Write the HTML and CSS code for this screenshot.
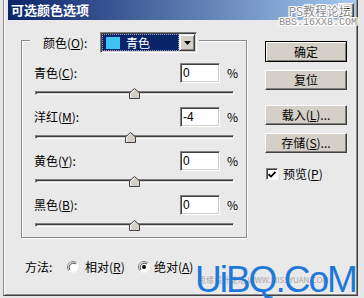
FILE: index.html
```html
<!DOCTYPE html>
<html lang="zh-CN">
<head>
<meta charset="utf-8">
<title>可选颜色选项</title>
<link rel="stylesheet" href="styles.css">
</head>
<body>
<div class="screen">
  <div class="window">
    <div class="titlebar">
      <span class="title">可选颜色选项</span>
      <span class="close-btn"><svg width="8" height="7" viewBox="0 0 8 7"><path d="M0 0h2l2 2 2-2h2v1l-2.5 2.5 2.5 2.5v1h-2l-2-2-2 2h-2v-1l2.5-2.5-2.5-2.5z" fill="#000"/></svg></span>
    </div>
    <div class="client">
      <div class="main">
        <div class="group">
          <div class="group-head">
            <span class="lbl head-lbl">颜色(<u>O</u>):</span>
            <div class="select">
              <div class="select-value"><span class="swatch"></span><span>青色</span></div>
              <div class="select-btn"><svg width="7" height="4" viewBox="0 0 7 4"><path d="M0 0h7L3.5 4z" fill="#000"/></svg></div>
            </div>
          </div>
          <div class="rows">
            <div class="row">
              <div class="line"><span class="lbl">青色(<u>C</u>):</span><div class="field">0</div><span class="pct">%</span></div>
              <div class="slider"><div class="track"></div><svg class="thumb" style="left:94px" width="11" height="11" viewBox="0 0 11 11"><path d="M0.5 10.5V5L5.5 0.5L10.5 5V10.5Z" fill="#d4d0c8" stroke="#404040"/><path d="M1.5 10V5.4L5.5 1.8" fill="none" stroke="#fff"/></svg></div>
            </div>
            <div class="row">
              <div class="line"><span class="lbl">洋红(<u>M</u>):</span><div class="field">-4</div><span class="pct">%</span></div>
              <div class="slider"><div class="track"></div><svg class="thumb" style="left:90px" width="11" height="11" viewBox="0 0 11 11"><path d="M0.5 10.5V5L5.5 0.5L10.5 5V10.5Z" fill="#d4d0c8" stroke="#404040"/><path d="M1.5 10V5.4L5.5 1.8" fill="none" stroke="#fff"/></svg></div>
            </div>
            <div class="row">
              <div class="line"><span class="lbl">黄色(<u>Y</u>):</span><div class="field">0</div><span class="pct">%</span></div>
              <div class="slider"><div class="track"></div><svg class="thumb" style="left:94px" width="11" height="11" viewBox="0 0 11 11"><path d="M0.5 10.5V5L5.5 0.5L10.5 5V10.5Z" fill="#d4d0c8" stroke="#404040"/><path d="M1.5 10V5.4L5.5 1.8" fill="none" stroke="#fff"/></svg></div>
            </div>
            <div class="row">
              <div class="line"><span class="lbl">黑色(<u>B</u>):</span><div class="field">0</div><span class="pct">%</span></div>
              <div class="slider"><div class="track"></div><svg class="thumb" style="left:94px" width="11" height="11" viewBox="0 0 11 11"><path d="M0.5 10.5V5L5.5 0.5L10.5 5V10.5Z" fill="#d4d0c8" stroke="#404040"/><path d="M1.5 10V5.4L5.5 1.8" fill="none" stroke="#fff"/></svg></div>
            </div>
          </div>
        </div>
        <div class="buttons">
          <button class="btn btn-default">确定</button>
          <button class="btn gap-s">复位</button>
          <button class="btn gap-l">载入(<u>L</u>)...</button>
          <button class="btn gap-s">存储(<u>S</u>)...</button>
          <div class="check">
            <span class="box"><svg width="8" height="7" viewBox="0 0 8 7"><path d="M0.5 3.2L3 5.6L7.5 1" fill="none" stroke="#000" stroke-width="1.8"/></svg></span>
            <span class="check-lbl">预览(<u>P</u>)</span>
          </div>
        </div>
      </div>
      <div class="method">
        <span class="method-lbl">方法:</span>
        <svg class="radio" width="12" height="12" viewBox="0 0 12 12"><circle cx="6" cy="6" r="5.5" fill="#fff"/><path d="M2.1 9.9A5.5 5.5 0 0 1 9.9 2.1" fill="none" stroke="#808080"/><path d="M9.9 2.1A5.5 5.5 0 0 1 2.1 9.9" fill="none" stroke="#f4f4f4"/><path d="M2.9 8.9A4.3 4.3 0 0 1 8.9 2.9" fill="none" stroke="#404040"/></svg>
        <span class="radio-lbl r1">相对(<u>R</u>)</span>
        <svg class="radio" width="12" height="12" viewBox="0 0 12 12"><circle cx="6" cy="6" r="5.5" fill="#fff"/><path d="M2.1 9.9A5.5 5.5 0 0 1 9.9 2.1" fill="none" stroke="#808080"/><path d="M9.9 2.1A5.5 5.5 0 0 1 2.1 9.9" fill="none" stroke="#f4f4f4"/><path d="M2.9 8.9A4.3 4.3 0 0 1 8.9 2.9" fill="none" stroke="#404040"/><circle cx="6" cy="6" r="2" fill="#000"/></svg>
        <span class="radio-lbl r2">绝对(<u>A</u>)</span>
      </div>
    </div>
    <div class="wm-top">
      <div class="wm-name">PS教程论坛</div>
      <div class="wm-url">BBS.16XX8.COM</div>
    </div>
    <div class="wm-bottom">
      <span class="wm-sub">思缘设计论坛 WWW.MISSYUAN.COM</span>
      <span class="wm-logo">UiBQ.CoM</span>
    </div>
  </div>
</div>
</body>
</html>
```

FILE: styles.css
```css
* { box-sizing: border-box; }
html, body { margin: 0; padding: 0; }
body {
  background: #e6e6e6;
  font-family: "Noto Sans CJK SC", "Liberation Sans", sans-serif;
  font-size: 12px;
  color: #000;
}
u { text-decoration: underline; text-underline-offset: 1px; }

.screen { width: 364px; height: 298px; overflow: hidden; background: #e6e6e6; }

.window {
  position: relative;
  margin-left: 3px;
  width: 355px;
  height: 296px;
  background: #e9e9e9;
  border-left: 1px solid #8a8a8a;
  border-right: 1px solid #404040;
  border-bottom: 1px solid #404040;
  box-shadow: inset 1px 0 0 #fff, inset -1px -1px 0 #8a8a8a;
  padding: 0 1px 0 4px;
}

.titlebar {
  height: 20px;
  display: flex;
  align-items: center;
  padding: 0 2px 0 3px;
  background: linear-gradient(to right, #0a246a, #a6caf0);
  color: #fff;
}
.title { font-size: 13px; font-weight: bold; line-height: 16px; }
.close-btn {
  margin-left: auto;
  width: 16px;
  height: 14px;
  display: flex;
  align-items: center;
  justify-content: center;
  background: #d4d0c8;
  border: 1px solid;
  border-color: #fff #404040 #404040 #fff;
  box-shadow: inset -1px -1px 0 #808080;
}

.client { padding-left: 13px; }
.main { display: flex; align-items: flex-start; }

.group {
  margin-top: 20px;
  width: 226px;
  height: 198px;
  border: 1px solid #8a8a8a;
  box-shadow: inset 1px 1px 0 #fff, 1px 1px 0 #fff;
  display: flex;
  flex-direction: column;
}
.group-head {
  align-self: flex-start;
  margin: -9px 0 0 8px;
  height: 21px;
  padding: 0 2px 0 13px;
  background: #e9e9e9;
  display: flex;
  align-items: center;
}
.lbl { line-height: 16px; white-space: nowrap; }
.head-lbl { width: 57px; }

.select {
  width: 97px;
  height: 21px;
  display: flex;
  padding: 1px;
  border: 1px solid;
  border-color: #808080 #fff #fff #808080;
  box-shadow: inset 1px 1px 0 #404040, inset -1px -1px 0 #d4d0c8;
  background: #fff;
}
.select-value {
  flex: 1;
  display: flex;
  align-items: center;
  padding-left: 4px;
  background: #0a246a;
  color: #fff;
  outline: 1px dotted #9aa6c8;
  outline-offset: -1px;
  line-height: 16px;
}
.swatch {
  width: 14px;
  height: 12px;
  margin-right: 6px;
  background: #3ec4f2;
}
.select-btn {
  width: 16px;
  display: flex;
  align-items: center;
  justify-content: center;
  background: #d4d0c8;
  border: 1px solid;
  border-color: #e9e9e9 #404040 #404040 #e9e9e9;
  box-shadow: inset 1px 1px 0 #fff, inset -1px -1px 0 #808080;
}

.rows { padding-top: 10px; }
.row { height: 44px; padding-left: 12px; }
.line { display: flex; align-items: center; height: 20px; }
.line .lbl { width: 146px; }
.field {
  width: 40px;
  height: 20px;
  padding-left: 2px;
  background: #fff;
  border: 1px solid;
  border-color: #808080 #fff #fff #808080;
  box-shadow: inset 1px 1px 0 #404040, inset -1px -1px 0 #d4d0c8;
  line-height: 18px;
  font-family: "Liberation Sans", "Noto Sans CJK SC", sans-serif;
  font-size: 12px;
}
.pct { margin-left: 7px; line-height: 16px; }

.slider { position: relative; height: 20px; width: 199px; margin-left: 1px; padding-top: 8px; }
.track {
  height: 4px;
  border: 1px solid;
  border-color: #808080 #fff #fff #808080;
  box-shadow: inset 1px 1px 0 #404040, inset -1px -1px 0 #d4d0c8;
  background: #e9e9e9;
}
.thumb { position: absolute; top: 5px; display: block; }

.buttons {
  margin-left: 18px;
  margin-top: 21px;
  width: 82px;
  display: flex;
  flex-direction: column;
}
.btn {
  width: 82px;
  height: 20px;
  padding: 0;
  font: inherit;
  line-height: 16px;
  color: #000;
  background: #d4d0c8;
  border: 1px solid;
  border-color: #fff #404040 #404040 #fff;
  box-shadow: inset -1px -1px 0 #808080;
}
.btn-default {
  height: 21px;
  border-color: #000;
  box-shadow: inset 1px 1px 0 #fff, inset -1px -1px 0 #808080;
}
.gap-s { margin-top: 8px; }
.gap-l { margin-top: 15px; }

.check { margin-top: 15px; height: 12px; display: flex; align-items: center; padding-left: 1px; }
.box {
  width: 12px;
  height: 12px;
  display: flex;
  align-items: center;
  justify-content: center;
  background: #fff;
  border: 1px solid;
  border-color: #808080 #fff #fff #808080;
  box-shadow: inset 1px 1px 0 #404040;
}
.check-lbl { margin-left: 5px; line-height: 16px; white-space: nowrap; }

.method { display: flex; align-items: center; height: 16px; margin-top: 21px; padding-left: 4px; }
.method-lbl { width: 42px; line-height: 16px; }
.radio { display: block; flex: none; }
.radio-lbl { line-height: 16px; white-space: nowrap; }
.r1 { margin-left: 6px; width: 53px; }
.r2 { margin-left: 4px; }

.wm-top {
  position: absolute;
  right: 0;
  top: 4px;
  display: flex;
  flex-direction: column;
  align-items: flex-end;
  color: #8c8c8c;
  text-shadow: 1px 0 0 #fff, -1px 0 0 #fff, 0 1px 0 #fff, 0 -1px 0 #fff, 1px 1px 0 #fff, -1px -1px 0 #fff, 1px -1px 0 #fff, -1px 1px 0 #fff;
}
.wm-name { font-size: 12px; line-height: 13px; padding-right: 6px; }
.wm-url { font-family: "Liberation Mono", monospace; font-size: 10px; line-height: 11px; }

.wm-bottom { position: absolute; left: 191px; top: 261px; right: 0; height: 34px; }
.wm-sub {
  position: absolute;
  left: 3px;
  top: 14px;
  font-size: 8px;
  line-height: 10px;
  color: #a8a8a8;
  white-space: nowrap;
}
.wm-logo {
  position: absolute;
  left: 0;
  top: 0;
  font-family: "Liberation Sans", sans-serif;
  font-size: 37px;
  line-height: 37px;
  letter-spacing: -2px;
  color: #1e78da;
  white-space: nowrap;
}
```
